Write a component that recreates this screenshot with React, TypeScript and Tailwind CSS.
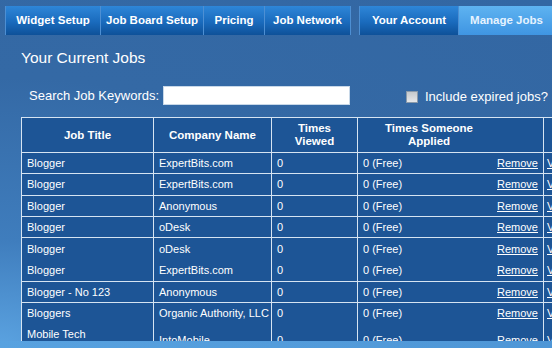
import React from "react";

type Job = {
  title: string;
  company: string;
  views: string;
  applied: string;
  h: string;
  joinNext?: boolean;
  lowered?: boolean;
};

const jobs: Job[] = [
  { title: "Blogger", company: "ExpertBits.com", views: "0", applied: "0 (Free)", h: "h-[21px]" },
  { title: "Blogger", company: "ExpertBits.com", views: "0", applied: "0 (Free)", h: "h-[22px]" },
  { title: "Blogger", company: "Anonymous", views: "0", applied: "0 (Free)", h: "h-[21px]" },
  { title: "Blogger", company: "oDesk", views: "0", applied: "0 (Free)", h: "h-[21px]" },
  { title: "Blogger", company: "oDesk", views: "0", applied: "0 (Free)", h: "h-[22px]", joinNext: true },
  { title: "Blogger", company: "ExpertBits.com", views: "0", applied: "0 (Free)", h: "h-[22px]" },
  { title: "Blogger - No 123", company: "Anonymous", views: "0", applied: "0 (Free)", h: "h-[21px]" },
  { title: "Bloggers", company: "Organic Authority, LLC", views: "0", applied: "0 (Free)", h: "h-[21px]", joinNext: true },
  { title: "Mobile Tech", company: "IntoMobile", views: "0", applied: "0 (Free)", h: "h-[22px]", lowered: true },
];

const navLeft = [
  { label: "Widget Setup", w: "w-[95px]" },
  { label: "Job Board Setup", w: "w-[103px]" },
  { label: "Pricing", w: "w-[61px]" },
  { label: "Job Network", w: "w-[86px]" },
];

function Tab({ label, w, active }: { label: string; w: string; active?: boolean }) {
  return (
    <div
      className={`${w} flex items-center justify-center border-r border-[#4d8fd3] text-[11.5px] font-bold ${
        active
          ? "bg-[linear-gradient(#5eb3f1,#3f95e2)] text-[#e6f3ff]"
          : "bg-[linear-gradient(#2e86d8,#1a6bbd_55%,#0e5199)] text-white"
      }`}
    >
      {label}
    </div>
  );
}

export default function App() {
  const cell = "border-x border-[#d6e4f2] px-[5px] text-[11px] text-white whitespace-nowrap";
  const head = "border-x border-[#d6e4f2] text-[11.5px] font-bold leading-[13px]";

  return (
    <div className="flex h-[348px] w-[552px] flex-col overflow-hidden bg-[radial-gradient(ellipse_at_0%_100%,#5ba3e1_0%,#3f7dbd_22%,#3469a5_55%,#3367a3_100%)] font-['Liberation_Sans',Arial,sans-serif]">
      <div className="flex-1 overflow-hidden">
        {/* top navigation */}
        <div className="mt-[6px] flex h-[29px] pl-[5px]">
          <div className="flex border-l border-[#4d8fd3]">
            {navLeft.map((t) => (
              <Tab key={t.label} label={t.label} w={t.w} />
            ))}
          </div>
          <div className="ml-[8px] flex border-l border-[#4d8fd3]">
            <Tab label="Your Account" w="w-[99px]" />
            <Tab label="Manage Jobs" w="w-[96px]" active />
          </div>
        </div>

        <h1 className="mt-[14px] pl-[21px] text-[15.5px] leading-[18px] text-white">
          Your Current Jobs
        </h1>

        <div className="mt-[19px] flex h-[19px] items-center text-[13px] text-white">
          <span className="ml-[29px] w-[134px] whitespace-nowrap">Search Job Keywords:</span>
          <input
            type="text"
            className="h-[19px] w-[187px] border border-[#c8d8e8] bg-white outline-none"
          />
          <span className="ml-[56px] mt-[3px] h-[12px] w-[12px] border border-[#8a9aaa] bg-[linear-gradient(#c4c8cc,#e6e8ea)]" />
          <span className="ml-[7px] mt-[3px] whitespace-nowrap">Include expired jobs?</span>
        </div>

        <table className="ml-[21px] mt-[12px] w-[570px] table-fixed border-collapse border border-[#d6e4f2] bg-[#1d5596]">
          <thead>
            <tr className="h-[35px] border-b border-[#d6e4f2] text-white">
              <th className={`${head} w-[132px]`}>Job Title</th>
              <th className={`${head} w-[118px]`}>Company Name</th>
              <th className={`${head} w-[86px]`}>
                Times
                <br />
                Viewed
              </th>
              <th className={`${head} w-[186px]`}>
                <div className="w-[142px] text-center">
                  Times Someone
                  <br />
                  Applied
                </div>
              </th>
              <th className={head} />
            </tr>
          </thead>
          <tbody>
            {jobs.map((j, i) => {
              const low = j.lowered ? "relative top-[6px]" : "";
              return (
                <tr key={i} className={`${j.h} ${j.joinNext ? "" : "border-b border-[#d6e4f2]"}`}>
                  <td className={cell}>{j.title}</td>
                  <td className={cell}>
                    <span className={low}>{j.company}</span>
                  </td>
                  <td className={cell}>
                    <span className={low}>{j.views}</span>
                  </td>
                  <td className={cell}>
                    <div className={`flex justify-between ${low}`}>
                      <span>{j.applied}</span>
                      <a className="cursor-pointer underline">Remove</a>
                    </div>
                  </td>
                  <td className={`${cell} pl-[3px]`}>
                    <a className={`cursor-pointer underline ${low}`}>View</a>
                  </td>
                </tr>
              );
            })}
          </tbody>
        </table>
      </div>
      <div className="h-[7px] shrink-0 bg-[linear-gradient(90deg,#58a2e0,#4e96d6)]" />
    </div>
  );
}
